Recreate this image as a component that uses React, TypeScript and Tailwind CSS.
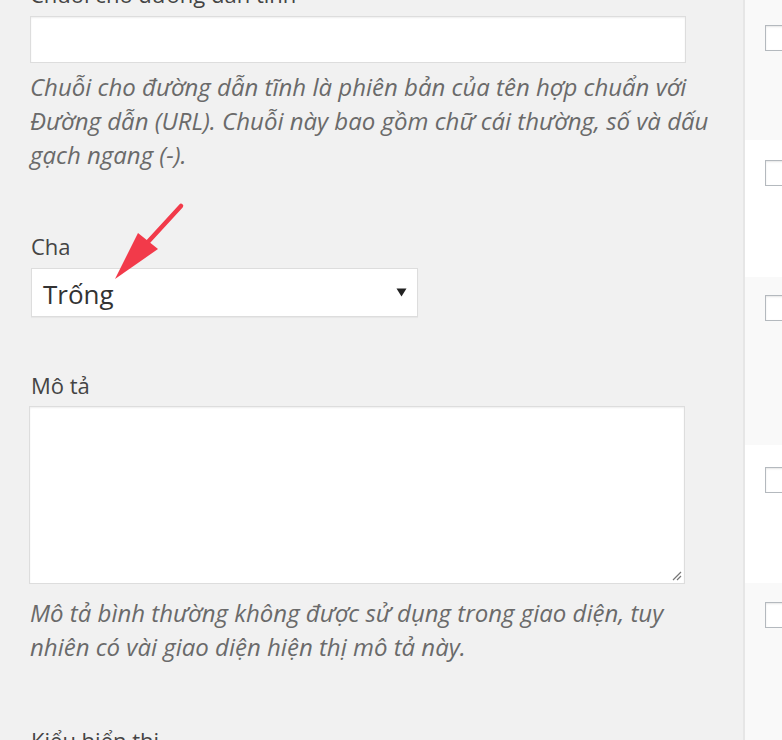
const font = { fontFamily: '"Open Sans", "Noto Sans", sans-serif' };

function Checkbox() {
  return (
    <span className="block w-[25px] h-[26px] border border-[#b4b9be] bg-white shadow-[inset_0_1px_2px_rgba(0,0,0,0.1)]" />
  );
}

const rows = [
  { h: "h-[140px]", pt: "pt-[25px]", bg: "bg-[#f9f9f9]" },
  { h: "h-[137px]", pt: "pt-[20px]", bg: "bg-white" },
  { h: "h-[168px]", pt: "pt-[18px]", bg: "bg-[#f9f9f9]" },
  { h: "h-[138px]", pt: "pt-[22px]", bg: "bg-white" },
  { h: "h-[160px]", pt: "pt-[19px]", bg: "bg-[#f9f9f9]" },
];

export default function App() {
  return (
    <div className="relative w-[782px] h-[740px] overflow-hidden bg-[#f1f1f1] flex" style={font}>
      <div className="w-[743px] shrink-0 pl-[30px]">
        <div className="-mt-[21px] text-[22px] leading-[30px] text-[#444]">Chuỗi cho đường dẫn tĩnh</div>
        <div className="mt-[7px] w-[656px] h-[47px] bg-white border border-[#ddd] shadow-[inset_0_1px_2px_rgba(0,0,0,0.07)]" />
        <p className="mt-[7px] w-[700px] text-[24px] leading-[34px] italic text-[#6a6a6a]">
          Chuỗi cho đường dẫn tĩnh là phiên bản của tên hợp chuẩn với Đường dẫn (URL). Chuỗi này bao gồm chữ cái thường, số và dấu gạch ngang (-).
        </p>

        <div className="mt-[59px] text-[22px] leading-[30px] text-[#444] pl-[1px]">Cha</div>
        <div className="mt-[7px] ml-[1px] w-[387px] h-[49px] bg-white border border-[#ddd] flex items-center justify-between pl-[11px] pr-[10px] shadow-[0_1px_1px_rgba(0,0,0,0.04)]">
          <span className="text-[26px] leading-[34px] text-[#333] pt-[2px]">Trống</span>
          <svg width="11" height="9" viewBox="0 0 11 9">
            <path d="M0.5 0.5 L10.5 0.5 L5.5 8.5 Z" fill="#222" />
          </svg>
        </div>

        <div className="mt-[53px] text-[22px] leading-[30px] text-[#444] pl-[1px]">Mô tả</div>
        <div className="relative mt-[6px] -ml-[1px] w-[656px] h-[178px] bg-white border border-[#ddd] shadow-[inset_0_1px_2px_rgba(0,0,0,0.07)]">
          <svg className="absolute right-[2px] bottom-[2px]" width="12" height="12" viewBox="0 0 12 12">
            <path d="M11 3 L3 11 M11 7 L7 11" stroke="#777" strokeWidth="1.2" />
          </svg>
        </div>
        <p className="mt-[12px] w-[680px] text-[24px] leading-[34px] italic text-[#6a6a6a]">
          Mô tả bình thường không được sử dụng trong giao diện, tuy nhiên có vài giao diện hiện thị mô tả này.
        </p>

        <div className="mt-[61px] text-[22px] leading-[30px] text-[#444] pl-[1px]">Kiểu hiển thị</div>
      </div>

      <div className="w-[2px] shrink-0 bg-[#e6e6e6]" />
      <div className="flex-1 flex flex-col">
        {rows.map((r, i) => (
          <div key={i} className={`${r.h} ${r.pt} ${r.bg} shrink-0 pl-[20px]`}>
            <Checkbox />
          </div>
        ))}
      </div>

      <svg className="absolute left-0 top-0 pointer-events-none" width="782" height="740">
        <line x1="181" y1="206" x2="147" y2="243" stroke="#f23a4a" strokeWidth="4.5" strokeLinecap="round" />
        <path d="M115 279 L138 233 L158 249 Z" fill="#f23a4a" />
      </svg>
    </div>
  );
}
